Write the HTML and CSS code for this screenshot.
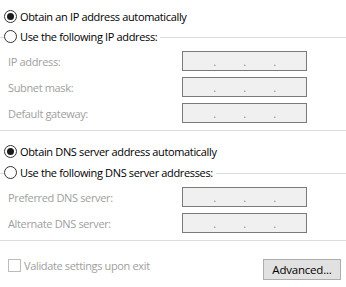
FILE: index.html
```html
<!DOCTYPE html>
<html>
<head>
<meta charset="utf-8">
<link rel="stylesheet" href="styles.css">
</head>
<body>
<div class="page">
  <div class="group ip">
    <div class="radio-row first">
      <span class="radio checked"></span>
      <span class="label">Obtain an IP address automatically</span>
    </div>
    <div class="radio-row header">
      <span class="lead"></span>
      <span class="radio"></span>
      <span class="label">Use the following IP address:</span>
      <span class="rule"></span>
    </div>
    <div class="fields">
      <div class="field"><span class="flabel">IP address:</span><span class="ipbox"><i>.</i><i>.</i><i>.</i></span></div>
      <div class="field"><span class="flabel">Subnet mask:</span><span class="ipbox"><i>.</i><i>.</i><i>.</i></span></div>
      <div class="field"><span class="flabel">Default gateway:</span><span class="ipbox"><i>.</i><i>.</i><i>.</i></span></div>
    </div>
  </div>
  <div class="group dns">
    <div class="radio-row first">
      <span class="radio checked"></span>
      <span class="label">Obtain DNS server address automatically</span>
    </div>
    <div class="radio-row header">
      <span class="lead"></span>
      <span class="radio"></span>
      <span class="label">Use the following DNS server addresses:</span>
      <span class="rule"></span>
    </div>
    <div class="fields">
      <div class="field"><span class="flabel">Preferred DNS server:</span><span class="ipbox"><i>.</i><i>.</i><i>.</i></span></div>
      <div class="field"><span class="flabel">Alternate DNS server:</span><span class="ipbox"><i>.</i><i>.</i><i>.</i></span></div>
    </div>
  </div>
  <div class="footer">
    <div class="check-row">
      <span class="checkbox"></span>
      <span class="clabel">Validate settings upon exit</span>
    </div>
    <button class="button">Advanced...</button>
  </div>
</div>
</body>
</html>
```
FILE: styles.css
```css
html, body {
  margin: 0;
  padding: 0;
  background: #ffffff;
}
body {
  font-family: "Open Sans", "Noto Sans", sans-serif;
  font-size: 11px;
  letter-spacing: -0.35px;
  color: #000;
  width: 346px;
  height: 287px;
  overflow: hidden;
}
.page {
  display: flex;
  flex-direction: column;
}
.group {
  display: flex;
  flex-direction: column;
  border-bottom: 1px solid #dcdcdc;
}
.ip {
  padding-top: 6px;
  padding-bottom: 7px;
}
.dns {
  margin-top: 10px;
  padding-bottom: 7px;
}
.radio-row {
  display: flex;
  align-items: center;
  height: 20px;
  padding-left: 4px;
}
.dns .radio-row.header {
  margin-top: 1px;
}
.radio-row.header {
  padding-left: 0;
}
.lead {
  width: 4px;
  height: 1px;
  background: #dcdcdc;
  margin-top: 2px;
}
.rule {
  flex: 1;
  height: 1px;
  background: #dcdcdc;
  margin-left: 3px;
  margin-top: 2px;
}
.radio {
  box-sizing: border-box;
  width: 13px;
  height: 13px;
  border: 1px solid #333;
  border-radius: 50%;
  display: flex;
  align-items: center;
  justify-content: center;
  flex: none;
}
.radio.checked::after {
  content: "";
  width: 7px;
  height: 7px;
  border-radius: 50%;
  background: #1a1a1a;
}
.label {
  margin-left: 3px;
  white-space: nowrap;
}
.fields {
  display: flex;
  flex-direction: column;
  gap: 6px;
  margin-top: 5px;
}
.field {
  display: flex;
  align-items: center;
  justify-content: space-between;
  padding-left: 8px;
  padding-right: 39px;
}
.flabel {
  color: #a0a0a0;
}
.ipbox {
  box-sizing: border-box;
  width: 125px;
  height: 20px;
  border: 1px solid #7a7a7a;
  background: #f0f0f0;
  display: flex;
  justify-content: center;
  align-items: flex-end;
}
.ipbox i {
  font-style: normal;
  width: 30px;
  text-align: center;
  color: #8a8a8a;
  font-size: 11px;
  line-height: 16px;
}
.footer {
  display: flex;
  justify-content: space-between;
  align-items: flex-start;
  margin-top: 18px;
  padding-left: 8px;
  padding-right: 5px;
}
.check-row {
  display: flex;
  align-items: center;
  height: 13px;
}
.checkbox {
  box-sizing: border-box;
  width: 13px;
  height: 13px;
  border: 1px solid #bcbcbc;
  background: #fff;
}
.clabel {
  margin-left: 3px;
  color: #a0a0a0;
}
.button {
  box-sizing: border-box;
  width: 78px;
  height: 21px;
  border: 1px solid #adadad;
  background: #e1e1e1;
  font-family: "Open Sans", "Noto Sans", sans-serif;
  font-size: 11.5px;
  letter-spacing: -0.2px;
  color: #000;
  padding: 0;
  margin: 0;
}
```
